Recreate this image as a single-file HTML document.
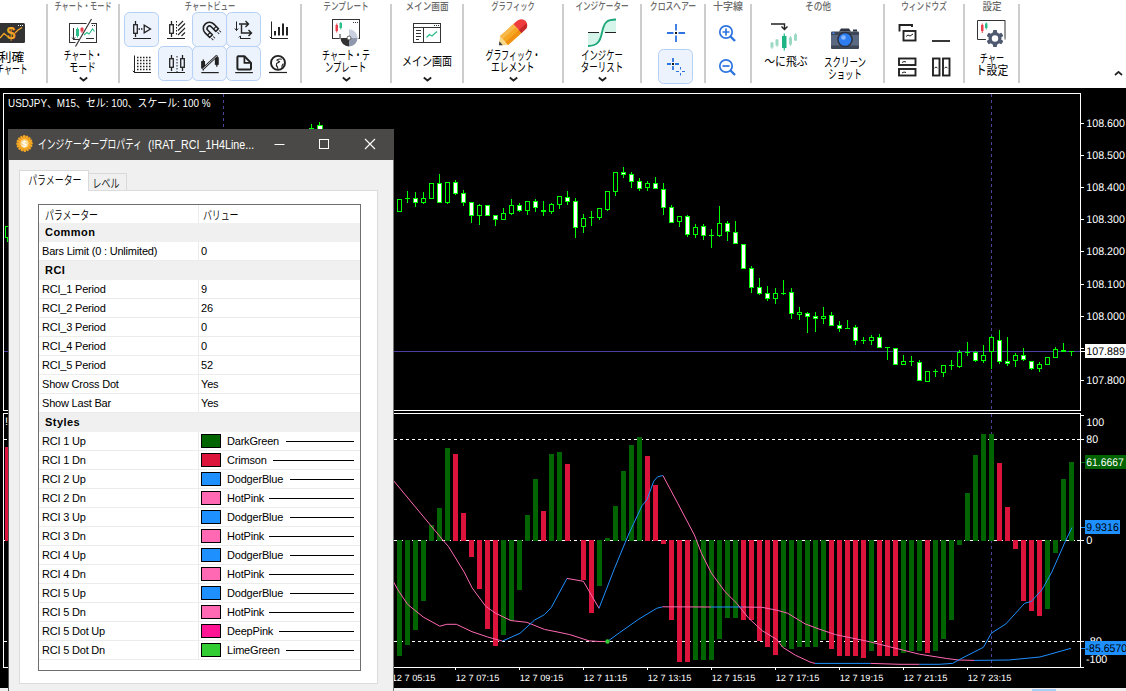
<!DOCTYPE html>
<html lang="ja"><head><meta charset="utf-8"><title>cTrader - インジケータープロパティ</title>
<style>
html,body{margin:0;padding:0}
body{width:1126px;height:691px;overflow:hidden;background:#000;position:relative;font-family:"Liberation Sans","Noto Sans CJK JP",sans-serif;}
.chart{position:absolute;left:0;top:0}
.strip{position:absolute;left:0;top:688px;width:1126px;height:3px;background:#efefef}
.strip i{position:absolute;left:1032px;top:1px;width:24px;height:2px;background:#a8cef5}
.sym{position:absolute;left:8px;top:97px;color:#fff;font-size:11px;line-height:13px;white-space:nowrap;transform-origin:0 0;transform:scaleX(.898)}
/* toolbar */
.tb{position:absolute;left:0;top:0;width:1126px;height:88px;background:#fff}
.sep{position:absolute;top:3.5px;width:1.4px;height:79.5px;background:#cdcdcd;margin-left:-.7px}
.gl{position:absolute;top:0;height:13px;line-height:13px;font-size:10.5px;font-weight:500;color:#6a6a6a;white-space:nowrap;text-align:center;transform:translateX(-50%)}
.gl span,.bl span{display:inline-block;transform-origin:50% 50%}
.bl{position:absolute;font-size:12.5px;line-height:12px;font-weight:400;color:#000;white-space:nowrap;text-align:center;transform:translateX(-50%)}
.tg{position:absolute;width:35px;height:35px;border:1.5px solid #b5d0f5;background:#edf3fd;border-radius:5.5px;box-sizing:border-box;margin:-.6px 0 0 -.6px}
.ic{position:absolute}
.chev{position:absolute;width:9px;height:6px}
/* dialog */
.dlg{position:absolute;left:8px;top:129px;width:386px;height:562px;background:#f0f0f0;font-size:11px;color:#000;box-sizing:border-box;border-left:1px solid #555452;border-right:1px solid #7a7978}
.dlg>*{margin-left:-1px}
.ttl{position:absolute;left:0;top:0;width:386px;height:31px;background:#4a4947}
.ticon{position:absolute;left:8px;top:6px}
.ttxt{position:absolute;top:7.5px;color:#fff;font-size:12.5px;line-height:16px;white-space:nowrap;transform-origin:0 50%}
.tk{left:30px;transform:scaleX(.7)}
.tl{left:139.5px;transform:scaleX(.855)}
.tbtn{position:absolute;top:9px}
.tab{position:absolute;box-sizing:border-box;border:1px solid #d9d9d9;border-bottom:none;font-size:12px;white-space:nowrap;text-align:center}
.tab span{display:inline-block;transform-origin:50% 50%;transform:scaleX(.745);font-weight:350;position:relative;top:1.5px;left:-1.5px}
.t1{left:11px;top:41px;width:70px;height:21px;background:#fff;line-height:17px;z-index:2}
.t2{left:80px;top:44px;width:39px;height:18px;background:#f0f0f0;line-height:16px}
.pane{position:absolute;left:11px;top:61px;width:359px;height:494px;background:#fff;border:1px solid #dcdcdc;box-sizing:border-box}
.tbl{position:absolute;left:30px;top:75px;width:323px;height:467px;border:1px solid #6e6e6e;box-sizing:border-box;background:#fff;overflow:hidden}
.hdr{height:18px;position:relative;font-size:12px}
.hdr .c2{padding-left:3.5px !important}
.hdr .c1,.hdr .c2{line-height:18px;border-bottom:none;padding-top:1.5px;padding-left:5.5px;font-weight:350}
.row{height:19px;position:relative;box-sizing:border-box;border-bottom:1px solid #ececec;line-height:18px;white-space:nowrap}
.grp{background:#f0f0f0;border-bottom-color:#f0f0f0;padding-left:6px;font-size:11px;line-height:19px;letter-spacing:.45px}
.c1{position:absolute;left:0;top:0;width:160px;height:100%;box-sizing:border-box;padding-left:3px;border-right:1px solid #ececec;letter-spacing:-.2px}
.c2{position:absolute;left:160px;top:0;right:0;height:100%;padding-left:2px;letter-spacing:-.2px}
.jp span{display:inline-block;transform-origin:0 50%;transform:scaleX(.75)}
.sw{position:absolute;left:2px;top:2px;width:18px;height:12px;border:1px solid #000}
.cn{position:absolute;left:28px;top:0}
.ln{position:absolute;top:9px;height:1px;background:#000}

</style></head><body>
<div class="strip"><i></i></div>
<svg class="chart" width="1126" height="691" viewBox="0 0 1126 691" shape-rendering="crispEdges">
<g fill="none" stroke="#fff" stroke-width="1">
<path d="M3.5 411 V93.5 H1080.5 V410.5 H3.5"/>
<path d="M3.5 667.5 V413.5 H1080.5 V667.5 H3.5"/>
</g>
<g stroke="#fff" stroke-width="1">
<path d="M1081 123.5 h3"/>
<path d="M1081 155.5 h3"/>
<path d="M1081 187.5 h3"/>
<path d="M1081 219.5 h3"/>
<path d="M1081 251.5 h3"/>
<path d="M1081 284.5 h3"/>
<path d="M1081 316.5 h3"/>
<path d="M1081 348.5 h3"/>
<path d="M1081 380.5 h3"/>
<path d="M1081 415.5 h3"/>
<path d="M1077 439.5 h7"/>
<path d="M1077 540.5 h7"/>
<path d="M1077 641.5 h7"/>
<path d="M1081 667.5 h3"/>
<path d="M1081 351.5 h4"/>
<path d="M455.5 667 v3"/>
<path d="M519.5 667 v3"/>
<path d="M583.5 667 v3"/>
<path d="M647.5 667 v3"/>
<path d="M711.5 667 v3"/>
<path d="M775.5 667 v3"/>
<path d="M839.5 667 v3"/>
<path d="M903.5 667 v3"/>
<path d="M967.5 667 v3"/>
</g>
<path d="M1081 462.5h4" stroke="#006400"/><path d="M1081 527.5h4M1081 648.5h4" stroke="#1e90ff"/>
<g stroke="#4c429a" stroke-width="1" stroke-dasharray="3 3">
<path d="M223.5 94 V410"/><path d="M991.5 94 V410"/><path d="M991.5 414 V667"/>
</g>
<path d="M4 351.5 H1080" stroke="#4a3f9e" stroke-width="1"/>
<g stroke="#fff" stroke-width="1" stroke-dasharray="3 3">
<path d="M4 439.5 H1080"/><path d="M4 540.5 H1080"/><path d="M4 641.5 H1080"/>
</g>
<rect x="5" y="447" width="5" height="94" fill="#dc143c"/>
<rect x="397" y="540" width="5" height="116" fill="#006400"/>
<rect x="405" y="540" width="5" height="105" fill="#006400"/>
<rect x="413" y="540" width="5" height="90" fill="#006400"/>
<rect x="421" y="540" width="5" height="61" fill="#006400"/>
<rect x="429" y="525" width="5" height="16" fill="#006400"/>
<rect x="437" y="508" width="5" height="33" fill="#006400"/>
<rect x="445" y="448" width="5" height="93" fill="#006400"/>
<rect x="453" y="454" width="5" height="87" fill="#dc143c"/>
<rect x="461" y="513" width="5" height="28" fill="#dc143c"/>
<rect x="469" y="540" width="5" height="17" fill="#dc143c"/>
<rect x="477" y="540" width="5" height="49" fill="#dc143c"/>
<rect x="485" y="540" width="5" height="89" fill="#dc143c"/>
<rect x="493" y="540" width="5" height="106" fill="#dc143c"/>
<rect x="501" y="540" width="5" height="95" fill="#006400"/>
<rect x="509" y="540" width="5" height="81" fill="#006400"/>
<rect x="517" y="540" width="5" height="50" fill="#006400"/>
<rect x="525" y="515" width="5" height="26" fill="#006400"/>
<rect x="533" y="479" width="5" height="62" fill="#006400"/>
<rect x="541" y="511" width="5" height="30" fill="#dc143c"/>
<rect x="549" y="454" width="5" height="87" fill="#006400"/>
<rect x="557" y="452" width="5" height="89" fill="#006400"/>
<rect x="565" y="464" width="5" height="77" fill="#dc143c"/>
<rect x="581" y="540" width="5" height="40" fill="#dc143c"/>
<rect x="589" y="540" width="5" height="73" fill="#dc143c"/>
<rect x="597" y="540" width="5" height="46" fill="#006400"/>
<rect x="605" y="538" width="5" height="3" fill="#006400"/>
<rect x="613" y="506" width="5" height="35" fill="#006400"/>
<rect x="621" y="471" width="5" height="70" fill="#006400"/>
<rect x="629" y="445" width="5" height="96" fill="#006400"/>
<rect x="637" y="437" width="5" height="104" fill="#006400"/>
<rect x="645" y="456" width="5" height="85" fill="#dc143c"/>
<rect x="653" y="485" width="5" height="56" fill="#dc143c"/>
<rect x="661" y="540" width="5" height="4" fill="#dc143c"/>
<rect x="669" y="540" width="5" height="80" fill="#dc143c"/>
<rect x="677" y="540" width="5" height="122" fill="#dc143c"/>
<rect x="685" y="540" width="5" height="122" fill="#dc143c"/>
<rect x="693" y="540" width="5" height="120" fill="#006400"/>
<rect x="701" y="540" width="5" height="120" fill="#006400"/>
<rect x="709" y="540" width="5" height="120" fill="#006400"/>
<rect x="717" y="540" width="5" height="99" fill="#006400"/>
<rect x="725" y="540" width="5" height="78" fill="#006400"/>
<rect x="733" y="540" width="5" height="78" fill="#006400"/>
<rect x="741" y="540" width="5" height="80" fill="#dc143c"/>
<rect x="749" y="540" width="5" height="80" fill="#dc143c"/>
<rect x="757" y="540" width="5" height="101" fill="#dc143c"/>
<rect x="765" y="540" width="5" height="107" fill="#dc143c"/>
<rect x="773" y="540" width="5" height="115" fill="#dc143c"/>
<rect x="781" y="540" width="5" height="107" fill="#006400"/>
<rect x="789" y="540" width="5" height="109" fill="#006400"/>
<rect x="797" y="540" width="5" height="107" fill="#006400"/>
<rect x="805" y="540" width="5" height="107" fill="#006400"/>
<rect x="813" y="540" width="5" height="107" fill="#006400"/>
<rect x="821" y="540" width="5" height="100" fill="#006400"/>
<rect x="829" y="540" width="5" height="109" fill="#dc143c"/>
<rect x="837" y="540" width="5" height="116" fill="#dc143c"/>
<rect x="845" y="540" width="5" height="116" fill="#dc143c"/>
<rect x="853" y="540" width="5" height="116" fill="#dc143c"/>
<rect x="861" y="540" width="5" height="118" fill="#dc143c"/>
<rect x="869" y="540" width="5" height="111" fill="#006400"/>
<rect x="877" y="540" width="5" height="116" fill="#dc143c"/>
<rect x="885" y="540" width="5" height="116" fill="#dc143c"/>
<rect x="893" y="540" width="5" height="116" fill="#dc143c"/>
<rect x="901" y="540" width="5" height="113" fill="#006400"/>
<rect x="909" y="540" width="5" height="111" fill="#006400"/>
<rect x="917" y="540" width="5" height="111" fill="#006400"/>
<rect x="925" y="540" width="5" height="113" fill="#dc143c"/>
<rect x="933" y="540" width="5" height="111" fill="#006400"/>
<rect x="941" y="540" width="5" height="99" fill="#006400"/>
<rect x="949" y="540" width="5" height="80" fill="#006400"/>
<rect x="957" y="540" width="5" height="5" fill="#006400"/>
<rect x="965" y="493" width="5" height="48" fill="#006400"/>
<rect x="973" y="455" width="5" height="86" fill="#006400"/>
<rect x="981" y="434" width="5" height="107" fill="#006400"/>
<rect x="989" y="434" width="5" height="107" fill="#006400"/>
<rect x="997" y="463" width="5" height="78" fill="#dc143c"/>
<rect x="1005" y="507" width="5" height="34" fill="#dc143c"/>
<rect x="1013" y="540" width="5" height="9" fill="#dc143c"/>
<rect x="1021" y="540" width="5" height="61" fill="#dc143c"/>
<rect x="1029" y="540" width="5" height="71" fill="#dc143c"/>
<rect x="1037" y="540" width="5" height="76" fill="#dc143c"/>
<rect x="1045" y="540" width="5" height="69" fill="#006400"/>
<rect x="1053" y="540" width="5" height="13" fill="#006400"/>
<rect x="1061" y="479" width="5" height="62" fill="#006400"/>
<rect x="1069" y="462" width="5" height="79" fill="#006400"/>
<rect x="311" y="124" width="1" height="6" fill="#00ff00"/><rect x="309" y="128" width="5" height="1" fill="#00ff00"/>
<rect x="319" y="122" width="1" height="4" fill="#00ff00"/><rect x="317" y="125" width="5" height="6" fill="#fff" stroke="#00ff00"/>
<rect x="7" y="226" width="1" height="16" fill="#00ff00"/>
<rect x="5.5" y="226.5" width="4" height="11" fill="#000" stroke="#00ff00" stroke-width="1"/>
<rect x="399" y="199" width="1" height="13" fill="#00ff00"/>
<rect x="397.5" y="199.5" width="4" height="12" fill="#000" stroke="#00ff00" stroke-width="1"/>
<rect x="407" y="191" width="1" height="12" fill="#00ff00"/>
<rect x="405" y="198" width="5" height="1" fill="#00ff00"/>
<rect x="415" y="192" width="1" height="15" fill="#00ff00"/>
<rect x="413.5" y="198.5" width="4" height="4" fill="#fff" stroke="#00ff00" stroke-width="1"/>
<rect x="423" y="192" width="1" height="12" fill="#00ff00"/>
<rect x="421.5" y="198.5" width="4" height="4" fill="#000" stroke="#00ff00" stroke-width="1"/>
<rect x="431" y="183" width="1" height="16" fill="#00ff00"/>
<rect x="429.5" y="183.5" width="4" height="15" fill="#000" stroke="#00ff00" stroke-width="1"/>
<rect x="439" y="174" width="1" height="29" fill="#00ff00"/>
<rect x="437.5" y="183.5" width="4" height="19" fill="#fff" stroke="#00ff00" stroke-width="1"/>
<rect x="447" y="182" width="1" height="22" fill="#00ff00"/>
<rect x="445.5" y="182.5" width="4" height="20" fill="#000" stroke="#00ff00" stroke-width="1"/>
<rect x="455" y="180" width="1" height="15" fill="#00ff00"/>
<rect x="453.5" y="182.5" width="4" height="11" fill="#fff" stroke="#00ff00" stroke-width="1"/>
<rect x="463" y="190" width="1" height="16" fill="#00ff00"/>
<rect x="461.5" y="193.5" width="4" height="9" fill="#fff" stroke="#00ff00" stroke-width="1"/>
<rect x="471" y="202" width="1" height="21" fill="#00ff00"/>
<rect x="469.5" y="202.5" width="4" height="13" fill="#fff" stroke="#00ff00" stroke-width="1"/>
<rect x="479" y="204" width="1" height="21" fill="#00ff00"/>
<rect x="477.5" y="205.5" width="4" height="10" fill="#000" stroke="#00ff00" stroke-width="1"/>
<rect x="487" y="205" width="1" height="11" fill="#00ff00"/>
<rect x="485.5" y="205.5" width="4" height="10" fill="#fff" stroke="#00ff00" stroke-width="1"/>
<rect x="495" y="215" width="1" height="11" fill="#00ff00"/>
<rect x="493.5" y="215.5" width="4" height="4" fill="#fff" stroke="#00ff00" stroke-width="1"/>
<rect x="503" y="208" width="1" height="12" fill="#00ff00"/>
<rect x="501.5" y="213.5" width="4" height="6" fill="#000" stroke="#00ff00" stroke-width="1"/>
<rect x="511" y="199" width="1" height="16" fill="#00ff00"/>
<rect x="509.5" y="205.5" width="4" height="8" fill="#000" stroke="#00ff00" stroke-width="1"/>
<rect x="519" y="203" width="1" height="9" fill="#00ff00"/>
<rect x="517.5" y="205.5" width="4" height="5" fill="#fff" stroke="#00ff00" stroke-width="1"/>
<rect x="527" y="201" width="1" height="14" fill="#00ff00"/>
<rect x="525.5" y="201.5" width="4" height="9" fill="#000" stroke="#00ff00" stroke-width="1"/>
<rect x="535" y="199" width="1" height="13" fill="#00ff00"/>
<rect x="533.5" y="201.5" width="4" height="6" fill="#fff" stroke="#00ff00" stroke-width="1"/>
<rect x="543" y="201" width="1" height="15" fill="#00ff00"/>
<rect x="541.5" y="210.5" width="4" height="1" fill="#fff" stroke="#00ff00" stroke-width="1"/>
<rect x="551" y="203" width="1" height="11" fill="#00ff00"/>
<rect x="549.5" y="204.5" width="4" height="7" fill="#000" stroke="#00ff00" stroke-width="1"/>
<rect x="559" y="196" width="1" height="13" fill="#00ff00"/>
<rect x="557.5" y="196.5" width="4" height="8" fill="#000" stroke="#00ff00" stroke-width="1"/>
<rect x="567" y="191" width="1" height="14" fill="#00ff00"/>
<rect x="565.5" y="197.5" width="4" height="4" fill="#fff" stroke="#00ff00" stroke-width="1"/>
<rect x="575" y="198" width="1" height="40" fill="#00ff00"/>
<rect x="573.5" y="201.5" width="4" height="26" fill="#fff" stroke="#00ff00" stroke-width="1"/>
<rect x="583" y="214" width="1" height="19" fill="#00ff00"/>
<rect x="581.5" y="218.5" width="4" height="8" fill="#000" stroke="#00ff00" stroke-width="1"/>
<rect x="591" y="211" width="1" height="15" fill="#00ff00"/>
<rect x="589" y="217" width="5" height="1" fill="#00ff00"/>
<rect x="599" y="208" width="1" height="12" fill="#00ff00"/>
<rect x="597.5" y="208.5" width="4" height="9" fill="#000" stroke="#00ff00" stroke-width="1"/>
<rect x="607" y="191" width="1" height="20" fill="#00ff00"/>
<rect x="605.5" y="191.5" width="4" height="18" fill="#000" stroke="#00ff00" stroke-width="1"/>
<rect x="615" y="172" width="1" height="24" fill="#00ff00"/>
<rect x="613.5" y="172.5" width="4" height="19" fill="#000" stroke="#00ff00" stroke-width="1"/>
<rect x="623" y="167" width="1" height="11" fill="#00ff00"/>
<rect x="621.5" y="172.5" width="4" height="2" fill="#fff" stroke="#00ff00" stroke-width="1"/>
<rect x="631" y="172" width="1" height="16" fill="#00ff00"/>
<rect x="629.5" y="174.5" width="4" height="7" fill="#fff" stroke="#00ff00" stroke-width="1"/>
<rect x="639" y="178" width="1" height="13" fill="#00ff00"/>
<rect x="637.5" y="181.5" width="4" height="7" fill="#fff" stroke="#00ff00" stroke-width="1"/>
<rect x="647" y="181" width="1" height="10" fill="#00ff00"/>
<rect x="645.5" y="183.5" width="4" height="4" fill="#000" stroke="#00ff00" stroke-width="1"/>
<rect x="655" y="177" width="1" height="12" fill="#00ff00"/>
<rect x="653.5" y="183.5" width="4" height="5" fill="#fff" stroke="#00ff00" stroke-width="1"/>
<rect x="663" y="183" width="1" height="32" fill="#00ff00"/>
<rect x="661.5" y="189.5" width="4" height="18" fill="#fff" stroke="#00ff00" stroke-width="1"/>
<rect x="671" y="205" width="1" height="18" fill="#00ff00"/>
<rect x="669.5" y="207.5" width="4" height="15" fill="#fff" stroke="#00ff00" stroke-width="1"/>
<rect x="679" y="216" width="1" height="11" fill="#00ff00"/>
<rect x="677.5" y="216.5" width="4" height="5" fill="#000" stroke="#00ff00" stroke-width="1"/>
<rect x="687" y="215" width="1" height="22" fill="#00ff00"/>
<rect x="685.5" y="216.5" width="4" height="18" fill="#fff" stroke="#00ff00" stroke-width="1"/>
<rect x="695" y="224" width="1" height="14" fill="#00ff00"/>
<rect x="693.5" y="227.5" width="4" height="7" fill="#000" stroke="#00ff00" stroke-width="1"/>
<rect x="703" y="224" width="1" height="16" fill="#00ff00"/>
<rect x="701.5" y="226.5" width="4" height="9" fill="#fff" stroke="#00ff00" stroke-width="1"/>
<rect x="711" y="229" width="1" height="19" fill="#00ff00"/>
<rect x="709" y="235" width="5" height="1" fill="#00ff00"/>
<rect x="719" y="206" width="1" height="31" fill="#00ff00"/>
<rect x="717.5" y="223.5" width="4" height="12" fill="#000" stroke="#00ff00" stroke-width="1"/>
<rect x="727" y="221" width="1" height="20" fill="#00ff00"/>
<rect x="725.5" y="223.5" width="4" height="8" fill="#fff" stroke="#00ff00" stroke-width="1"/>
<rect x="735" y="221" width="1" height="23" fill="#00ff00"/>
<rect x="733.5" y="232.5" width="4" height="11" fill="#fff" stroke="#00ff00" stroke-width="1"/>
<rect x="743" y="244" width="1" height="25" fill="#00ff00"/>
<rect x="741.5" y="244.5" width="4" height="24" fill="#fff" stroke="#00ff00" stroke-width="1"/>
<rect x="751" y="266" width="1" height="27" fill="#00ff00"/>
<rect x="749.5" y="268.5" width="4" height="19" fill="#fff" stroke="#00ff00" stroke-width="1"/>
<rect x="759" y="278" width="1" height="17" fill="#00ff00"/>
<rect x="757.5" y="287.5" width="4" height="6" fill="#fff" stroke="#00ff00" stroke-width="1"/>
<rect x="767" y="286" width="1" height="15" fill="#00ff00"/>
<rect x="765.5" y="293.5" width="4" height="5" fill="#fff" stroke="#00ff00" stroke-width="1"/>
<rect x="775" y="288" width="1" height="16" fill="#00ff00"/>
<rect x="773.5" y="293.5" width="4" height="5" fill="#000" stroke="#00ff00" stroke-width="1"/>
<rect x="783" y="280" width="1" height="15" fill="#00ff00"/>
<rect x="781" y="293" width="5" height="1" fill="#00ff00"/>
<rect x="791" y="288" width="1" height="31" fill="#00ff00"/>
<rect x="789.5" y="292.5" width="4" height="21" fill="#fff" stroke="#00ff00" stroke-width="1"/>
<rect x="799" y="307" width="1" height="13" fill="#00ff00"/>
<rect x="797.5" y="312.5" width="4" height="2" fill="#000" stroke="#00ff00" stroke-width="1"/>
<rect x="807" y="312" width="1" height="21" fill="#00ff00"/>
<rect x="805.5" y="313.5" width="4" height="3" fill="#fff" stroke="#00ff00" stroke-width="1"/>
<rect x="815" y="312" width="1" height="20" fill="#00ff00"/>
<rect x="813.5" y="316.5" width="4" height="2" fill="#fff" stroke="#00ff00" stroke-width="1"/>
<rect x="823" y="307" width="1" height="17" fill="#00ff00"/>
<rect x="821.5" y="316.5" width="4" height="2" fill="#000" stroke="#00ff00" stroke-width="1"/>
<rect x="831" y="312" width="1" height="14" fill="#00ff00"/>
<rect x="829.5" y="315.5" width="4" height="10" fill="#fff" stroke="#00ff00" stroke-width="1"/>
<rect x="839" y="321" width="1" height="11" fill="#00ff00"/>
<rect x="837.5" y="325.5" width="4" height="3" fill="#fff" stroke="#00ff00" stroke-width="1"/>
<rect x="847" y="320" width="1" height="9" fill="#00ff00"/>
<rect x="845" y="328" width="5" height="1" fill="#00ff00"/>
<rect x="855" y="325" width="1" height="20" fill="#00ff00"/>
<rect x="853.5" y="327.5" width="4" height="13" fill="#fff" stroke="#00ff00" stroke-width="1"/>
<rect x="863" y="337" width="1" height="7" fill="#00ff00"/>
<rect x="861" y="340" width="5" height="1" fill="#00ff00"/>
<rect x="871" y="335" width="1" height="10" fill="#00ff00"/>
<rect x="869.5" y="337.5" width="4" height="3" fill="#000" stroke="#00ff00" stroke-width="1"/>
<rect x="879" y="334" width="1" height="14" fill="#00ff00"/>
<rect x="877.5" y="337.5" width="4" height="10" fill="#fff" stroke="#00ff00" stroke-width="1"/>
<rect x="887" y="347" width="1" height="13" fill="#00ff00"/>
<rect x="885" y="347" width="5" height="1" fill="#00ff00"/>
<rect x="895" y="348" width="1" height="17" fill="#00ff00"/>
<rect x="893.5" y="348.5" width="4" height="16" fill="#fff" stroke="#00ff00" stroke-width="1"/>
<rect x="903" y="355" width="1" height="10" fill="#00ff00"/>
<rect x="901.5" y="361.5" width="4" height="3" fill="#000" stroke="#00ff00" stroke-width="1"/>
<rect x="911" y="356" width="1" height="10" fill="#00ff00"/>
<rect x="909" y="361" width="5" height="1" fill="#00ff00"/>
<rect x="919" y="360" width="1" height="21" fill="#00ff00"/>
<rect x="917.5" y="362.5" width="4" height="18" fill="#fff" stroke="#00ff00" stroke-width="1"/>
<rect x="927" y="371" width="1" height="11" fill="#00ff00"/>
<rect x="925.5" y="371.5" width="4" height="10" fill="#000" stroke="#00ff00" stroke-width="1"/>
<rect x="935" y="369" width="1" height="8" fill="#00ff00"/>
<rect x="933" y="371" width="5" height="1" fill="#00ff00"/>
<rect x="943" y="365" width="1" height="12" fill="#00ff00"/>
<rect x="941.5" y="365.5" width="4" height="7" fill="#000" stroke="#00ff00" stroke-width="1"/>
<rect x="951" y="360" width="1" height="10" fill="#00ff00"/>
<rect x="949" y="365" width="5" height="1" fill="#00ff00"/>
<rect x="959" y="350" width="1" height="18" fill="#00ff00"/>
<rect x="957.5" y="352.5" width="4" height="14" fill="#000" stroke="#00ff00" stroke-width="1"/>
<rect x="967" y="342" width="1" height="14" fill="#00ff00"/>
<rect x="965" y="352" width="5" height="1" fill="#00ff00"/>
<rect x="975" y="351" width="1" height="11" fill="#00ff00"/>
<rect x="973.5" y="352.5" width="4" height="8" fill="#fff" stroke="#00ff00" stroke-width="1"/>
<rect x="983" y="345" width="1" height="18" fill="#00ff00"/>
<rect x="981.5" y="355.5" width="4" height="5" fill="#000" stroke="#00ff00" stroke-width="1"/>
<rect x="991" y="336" width="1" height="33" fill="#00ff00"/>
<rect x="989.5" y="337.5" width="4" height="14" fill="#000" stroke="#00ff00" stroke-width="1"/>
<rect x="999" y="330" width="1" height="34" fill="#00ff00"/>
<rect x="997.5" y="340.5" width="4" height="21" fill="#fff" stroke="#00ff00" stroke-width="1"/>
<rect x="1007" y="337" width="1" height="29" fill="#00ff00"/>
<rect x="1005.5" y="361.5" width="4" height="2" fill="#fff" stroke="#00ff00" stroke-width="1"/>
<rect x="1015" y="353" width="1" height="14" fill="#00ff00"/>
<rect x="1013.5" y="355.5" width="4" height="5" fill="#000" stroke="#00ff00" stroke-width="1"/>
<rect x="1023" y="348" width="1" height="13" fill="#00ff00"/>
<rect x="1021.5" y="355.5" width="4" height="4" fill="#fff" stroke="#00ff00" stroke-width="1"/>
<rect x="1031" y="361" width="1" height="9" fill="#00ff00"/>
<rect x="1029.5" y="361.5" width="4" height="7" fill="#fff" stroke="#00ff00" stroke-width="1"/>
<rect x="1039" y="362" width="1" height="10" fill="#00ff00"/>
<rect x="1037.5" y="364.5" width="4" height="4" fill="#000" stroke="#00ff00" stroke-width="1"/>
<rect x="1047" y="357" width="1" height="8" fill="#00ff00"/>
<rect x="1045.5" y="357.5" width="4" height="7" fill="#000" stroke="#00ff00" stroke-width="1"/>
<rect x="1055" y="347" width="1" height="11" fill="#00ff00"/>
<rect x="1053.5" y="349.5" width="4" height="8" fill="#000" stroke="#00ff00" stroke-width="1"/>
<rect x="1063" y="343" width="1" height="9" fill="#00ff00"/>
<rect x="1061.5" y="350.5" width="4" height="1" fill="#fff" stroke="#00ff00" stroke-width="1"/>
<rect x="1071" y="351" width="1" height="5" fill="#00ff00"/>
<rect x="1069" y="351" width="5" height="1" fill="#00ff00"/>
<g fill="none" stroke-width="1" shape-rendering="auto" stroke-linejoin="round">
<polyline stroke="#ff69b4" points="393,480 442.8,540 448.6,546.7 464.2,572.1 472,587.7 485.7,606.3 495.5,613.2 511,620.6 526.8,622.3 544.4,629.4 558,632.1 569.8,634.6 589.3,640.9 600,641.5 607.4,641.5"/>
<polyline stroke="#1e90ff" points="607.4,641.5 619.5,632.7 639,619 656.7,608.3 662.5,606.8"/>
<polyline stroke="#ff69b4" points="662.5,606.8 711,607"/>
<polyline stroke="#1e90ff" points="711,607 742.6,607"/>
<polyline stroke="#ff69b4" points="742.6,607 762,607.3 776.8,610.2 787.6,613.2 805.2,623.9 820,629.4 835.4,634.6 868.6,641.5 903.8,650.3 919.4,654.2 946.8,658.5 958.5,660 974,660.4"/>
<polyline stroke="#1e90ff" points="974,660.4 1008.8,660 1040,657 1071,648.3"/>
<polyline stroke="#ff69b4" points="393,581 398,590 407.6,604.4 423.2,617 439.8,626.2 446.7,624.3 456.4,624.3 472,631.7 487.7,637 502.3,641.1"/>
<polyline stroke="#1e90ff" points="502.3,641.1 520,633.3 534.6,620 544.4,614.7 551.2,607.7 567,578.4"/>
<polyline stroke="#ff69b4" points="567,578.4 583.4,581.3 599,608.3"/>
<polyline stroke="#1e90ff" points="599,608.3 614.6,568.2 628.3,535 642,505.7 646.9,499.9 653.7,481.3 657.6,476.8 662.9,475.5"/>
<polyline stroke="#ff69b4" points="662.9,475.5 678,503.8 694.4,535 701.6,553.6 711.4,573.1 725,591.7 736.8,603.4 748.5,618 762.2,630.7 776.8,639.5 782.7,647.3 795.4,655.2 810,662 815,663.4"/>
<polyline stroke="#1e90ff" points="815,663.4 870.6,663.4"/>
<polyline stroke="#ff69b4" points="870.6,663.4 900,664.3 919.4,664.3"/>
<polyline stroke="#1e90ff" points="919.4,664.3 939,664.3 952.6,663.4 960.4,659 983.4,647.3 991.3,633.2 1005.9,623.9 1024.5,603.4 1031.3,601.4 1042,589.7 1051.8,572.1 1065.5,540.9 1072,527.5"/>
</g>
<circle cx="607.5" cy="641.5" r="2.2" fill="#32cd32" shape-rendering="auto"/>
<g font-family="Liberation Sans, Arial, sans-serif" font-size="11" fill="#fff" shape-rendering="auto" text-rendering="geometricPrecision">
<text x="1086.3" y="127" textLength="38.6" lengthAdjust="spacingAndGlyphs">108.600</text>
<text x="1086.3" y="159" textLength="38.6" lengthAdjust="spacingAndGlyphs">108.500</text>
<text x="1086.3" y="191" textLength="38.6" lengthAdjust="spacingAndGlyphs">108.400</text>
<text x="1086.3" y="223" textLength="38.6" lengthAdjust="spacingAndGlyphs">108.300</text>
<text x="1086.3" y="255" textLength="38.6" lengthAdjust="spacingAndGlyphs">108.200</text>
<text x="1086.3" y="288" textLength="38.6" lengthAdjust="spacingAndGlyphs">108.100</text>
<text x="1086.3" y="320" textLength="38.6" lengthAdjust="spacingAndGlyphs">108.000</text>
<text x="1086.3" y="384" textLength="38.6" lengthAdjust="spacingAndGlyphs">107.800</text>
<text x="1086.3" y="425.5" textLength="17.8" lengthAdjust="spacingAndGlyphs">100</text>
<text x="1086.3" y="442.5" textLength="11.8" lengthAdjust="spacingAndGlyphs">80</text>
<text x="1086.3" y="544" >0</text>
<text x="5" y="425" font-size="11">!RAT_RCI_1H4Line</text>
<text x="1086" y="644.5" >-80</text>
<text x="1086" y="663" textLength="21.3" lengthAdjust="spacingAndGlyphs">-100</text>
<rect x="1085" y="344" width="41" height="14" fill="#fff" shape-rendering="crispEdges"/>
<rect x="1085" y="455" width="41" height="14" fill="#006400" shape-rendering="crispEdges"/>
<rect x="1085" y="520" width="35" height="14" fill="#1e90ff" shape-rendering="crispEdges"/>
<rect x="1085" y="641" width="41" height="14" fill="#1e90ff" shape-rendering="crispEdges"/>
<text x="1086.3" y="355" textLength="38.6" lengthAdjust="spacingAndGlyphs" fill="#000">107.889</text>
<text x="1086.3" y="465.5" textLength="37.4" lengthAdjust="spacingAndGlyphs">61.6667</text>
<text x="1086.3" y="530.7" textLength="32.5" lengthAdjust="spacingAndGlyphs" fill="#000">9.9316</text>
<text x="1085.6" y="651.6" textLength="41.5" lengthAdjust="spacingAndGlyphs" fill="#000">-85.6570</text>
</g>
<g font-family="Liberation Sans, Arial, sans-serif" font-size="9" fill="#fff" shape-rendering="auto" text-rendering="geometricPrecision">
<text x="391.7" y="681" textLength="43.6" lengthAdjust="spacingAndGlyphs">12 7 05:15</text>
<text x="455.7" y="681" textLength="43.6" lengthAdjust="spacingAndGlyphs">12 7 07:15</text>
<text x="519.7" y="681" textLength="43.6" lengthAdjust="spacingAndGlyphs">12 7 09:15</text>
<text x="583.7" y="681" textLength="43.6" lengthAdjust="spacingAndGlyphs">12 7 11:15</text>
<text x="647.7" y="681" textLength="43.6" lengthAdjust="spacingAndGlyphs">12 7 13:15</text>
<text x="711.7" y="681" textLength="43.6" lengthAdjust="spacingAndGlyphs">12 7 15:15</text>
<text x="775.7" y="681" textLength="43.6" lengthAdjust="spacingAndGlyphs">12 7 17:15</text>
<text x="839.7" y="681" textLength="43.6" lengthAdjust="spacingAndGlyphs">12 7 19:15</text>
<text x="903.7" y="681" textLength="43.6" lengthAdjust="spacingAndGlyphs">12 7 21:15</text>
<text x="967.7" y="681" textLength="43.6" lengthAdjust="spacingAndGlyphs">12 7 23:15</text>
</g>
</svg>
<div class="sym">USDJPY、M15、セル: 100、スケール: 100 %</div>
<div class="tb">
<i class="sep" style="left:47px"></i>
<i class="sep" style="left:119px"></i>
<i class="sep" style="left:301px"></i>
<i class="sep" style="left:391px"></i>
<i class="sep" style="left:463px"></i>
<i class="sep" style="left:563px"></i>
<i class="sep" style="left:641px"></i>
<i class="sep" style="left:705px"></i>
<i class="sep" style="left:751px"></i>
<i class="sep" style="left:884px"></i>
<i class="sep" style="left:964px"></i>
<i class="sep" style="left:1019px"></i>
<div class="gl" style="left:83px"><span style="transform:scaleX(0.681)">チャート・モード</span></div>
<div class="gl" style="left:210px"><span style="transform:scaleX(0.686)">チャートビュー</span></div>
<div class="gl" style="left:346px"><span style="transform:scaleX(0.725)">テンプレート</span></div>
<div class="gl" style="left:427px"><span style="transform:scaleX(0.820)">メイン画面</span></div>
<div class="gl" style="left:513px"><span style="transform:scaleX(0.695)">グラフィック</span></div>
<div class="gl" style="left:602px"><span style="transform:scaleX(0.724)">インジケーター</span></div>
<div class="gl" style="left:673px"><span style="transform:scaleX(0.755)">クロスヘアー</span></div>
<div class="gl" style="left:728px"><span style="transform:scaleX(0.950)">十字線</span></div>
<div class="gl" style="left:817.5px"><span style="transform:scaleX(0.833)">その他</span></div>
<div class="gl" style="left:924px"><span style="transform:scaleX(0.725)">ウィンドウズ</span></div>
<div class="gl" style="left:991.5px"><span style="transform:scaleX(0.915)">設定</span></div>
<div class="bl" style="left:11.5px;top:53px;line-height:11.8px"><div><span style="transform:scaleX(1.020)">利確</span></div><div><span style="transform:scaleX(0.630)">チャート</span></div></div>
<div class="bl" style="left:83px;top:51px;line-height:11.8px"><div><span style="transform:scaleX(0.616)">チャート・</span></div><div><span style="transform:scaleX(0.707)">モード</span></div></div>
<div class="bl" style="left:346px;top:51px;line-height:11.8px"><div><span style="transform:scaleX(0.640)">チャート・テ</span></div><div><span style="transform:scaleX(0.664)">ンプレート</span></div></div>
<div class="bl" style="left:427px;top:57px;line-height:11.8px"><div><span style="transform:scaleX(0.800)">メイン画面</span></div></div>
<div class="bl" style="left:513px;top:51px;line-height:11.8px"><div><span style="transform:scaleX(0.630)">グラフィック・</span></div><div><span style="transform:scaleX(0.696)">エレメント</span></div></div>
<div class="bl" style="left:602px;top:51px;line-height:11.8px"><div><span style="transform:scaleX(0.664)">インジケー</span></div><div><span style="transform:scaleX(0.680)">ターリスト</span></div></div>
<div class="bl" style="left:785.5px;top:57px;line-height:11.8px"><div><span style="transform:scaleX(0.870)">～に飛ぶ</span></div></div>
<div class="bl" style="left:845px;top:58.3px;line-height:11.8px"><div><span style="transform:scaleX(0.680)">スクリーン</span></div><div><span style="transform:scaleX(0.670)">ショット</span></div></div>
<div class="bl" style="left:992px;top:52.5px;line-height:12.5px"><div><span style="transform:scaleX(0.653)">チャー</span></div><div><span style="transform:scaleX(0.867)">ト設定</span></div></div>
<svg class="chev" style="left:78.5px;top:76.3px" viewBox="0 0 9 6"><path d="M0.8 1.6l3.7 2.9L8.2 1.6" fill="none" stroke="#222" stroke-width="1.9"/></svg>
<svg class="chev" style="left:341.5px;top:76.3px" viewBox="0 0 9 6"><path d="M0.8 1.6l3.7 2.9L8.2 1.6" fill="none" stroke="#222" stroke-width="1.9"/></svg>
<svg class="chev" style="left:422.5px;top:76.3px" viewBox="0 0 9 6"><path d="M0.8 1.6l3.7 2.9L8.2 1.6" fill="none" stroke="#222" stroke-width="1.9"/></svg>
<svg class="chev" style="left:508.5px;top:76.3px" viewBox="0 0 9 6"><path d="M0.8 1.6l3.7 2.9L8.2 1.6" fill="none" stroke="#222" stroke-width="1.9"/></svg>
<svg class="chev" style="left:597.5px;top:76.3px" viewBox="0 0 9 6"><path d="M0.8 1.6l3.7 2.9L8.2 1.6" fill="none" stroke="#222" stroke-width="1.9"/></svg>
<svg class="chev" style="left:1113.5px;top:70px" viewBox="0 0 9 6"><path d="M1 5l3.5 -3.2L8 5" fill="none" stroke="#222" stroke-width="1.7"/></svg>
<i class="tg" style="left:125px;top:13px"></i>
<i class="tg" style="left:193px;top:13px"></i>
<i class="tg" style="left:227px;top:13px"></i>
<i class="tg" style="left:159px;top:47px"></i>
<i class="tg" style="left:193px;top:47px"></i>
<i class="tg" style="left:227px;top:47px"></i>
<i class="tg" style="left:659px;top:50px"></i>
<svg class="ic" style="left:0;top:0" width="1126" height="88" viewBox="0 0 1126 88" fill="none">
<!-- 利確チャート (cut) -->
<rect x="-6" y="23" width="31" height="20" rx="1.5" fill="#333"/>
<path d="M0 38l4-4.5 3 2.5M15 33l3-3 4-2.5" stroke="#f5a623" stroke-width="1.3"/>
<text x="11" y="38.500" font-family="Liberation Sans, sans-serif" font-weight="bold" font-size="16" fill="#f5a623" text-anchor="middle">$</text>
<path d="M18 25.5h1M20 25.5h1M22 25.5h1" stroke="#fff" stroke-width="1"/>
<!-- チャート・モード -->
<rect x="69.5" y="23.5" width="27" height="19" stroke="#333" stroke-width="1"/>
<path d="M91.5 19L75.5 46.5" stroke="#fff" stroke-width="4"/>
<path d="M91.5 19L75.5 46.5" stroke="#333" stroke-width="1.2"/>
<path d="M92 25.5h1M94 25.5h1" stroke="#333"/>
<path d="M73.5 28v11M72 37.5l1.5 1.8 1.5-1.8M73 39.5h6" stroke="#333" stroke-width="1"/>
<rect x="76" y="29" width="3" height="7" fill="#2dbf8a"/><path d="M77.5 27.5v10" stroke="#2dbf8a"/>
<rect x="80.5" y="28" width="3" height="3.5" fill="#e8414d"/><path d="M82 27v6" stroke="#e8414d"/>
<path d="M84 35l3-2.5 2 1.5 3.5-5 2 2.5" stroke="#2dbf8a" stroke-width="1.1"/>
<path d="M86 38.500h8" stroke="#333"/>
<!-- r1c1 candle-arrow -->
<g stroke="#222" stroke-width="1.3">
<rect x="133.700" y="24.700" width="3.600" height="8.600"/><path d="M135.500 21v3.500M135.500 33.500v3.500"/>
<path d="M138.500 29h1.500M141 29h1.500"/>
<path d="M144.200 25.200v7.600l6.300-3.800z"/>
<path d="M133 38.500h18" stroke-width="1"/>
<!-- r1c2 candle-hatch -->
<rect x="169.700" y="24.700" width="3.600" height="8.600"/><path d="M171.500 21v3.500M171.500 33.500v3.500"/>
<path d="M176.500 21v1.500M176.500 24v1.500M176.500 27v1.500M176.500 30v1.500M176.500 33v1.500" stroke-width="1"/>
<path d="M178 26l5-5M178 30.500l7-7M178 35l7-7M181.500 36l3.500-3.500" stroke-width="1.100"/>
<path d="M167 38.500h18" stroke-width="1"/>
</g>
<!-- r1c3 magnet -->
<g transform="translate(209.500 28.500) rotate(45)" stroke="#222" stroke-width="1.600" stroke-linejoin="round">
<path d="M6.500 -6.200H0A6.200 6.200 0 0 0 0 6.200H6.500V2.400H0A2.400 2.400 0 0 1 0 -2.400H6.500Z"/>
<path d="M3.300 -6.200v3.800M3.300 2.400v3.800" stroke-width="1.200"/>
<path d="M8.300 -5.500h2.500M8.300 -3h2.500M8.300 3h2.500M8.300 5.500h2.500" stroke-width="1" />
</g>
<!-- r1c4 arrows -->
<g stroke="#222" stroke-width="1.4">
<path d="M236.500 21.500v9M234.800 28.500l1.700 2 1.700-2" stroke-width="1"/>
<path d="M239 24h9M245.500 21l3 3-3 3"/>
<path d="M241.500 24.500v8.500h10M248.500 30l3 3-3 3"/>
<path d="M240.500 36v3M238.800 37.500l1.700-1.700M240.500 38.500h10" stroke-width="1"/>
</g>
<!-- r1c5 bars -->
<g stroke="#222">
<path d="M271.500 21.500v17M269.800 36.800l1.700 1.700M271 38.500h17" stroke-width="1"/>
<path d="M275 31v4.500M279 27v8.500M283 23.500v12M287 27v8.500" stroke-width="2"/>
</g>
<!-- r2c1 grid -->
<g stroke="#222" stroke-width="1">
<path d="M134.500 55.500v17M132.800 70.800l1.700 1.700M134 72.500h17"/>
<path d="M137 57.500h14M137 60.500h14M137 63.500h14M137 66.500h14M137 69.500h14" stroke-dasharray="1.500 1.500" stroke-width="1.300"/>
</g>
<!-- r2c2 two candles -->
<g stroke="#222" stroke-width="1.3">
<rect x="169.700" y="58.700" width="3.600" height="8.600"/><path d="M171.500 55v3.500M171.500 67.500v3.500"/>
<rect x="180.700" y="58.700" width="3.600" height="8.600"/><path d="M182.500 55v3.500M182.500 67.500v3.500"/>
<path d="M177 56v1.500M177 59v1.500M177 62v1.500M177 65v1.500M177 68v1.500M177 71v2" stroke-width="1"/>
<path d="M167 72.500h18" stroke-width="1"/>
</g>
<!-- r2c3 candles + diagonal -->
<g stroke="#222" stroke-width="1.300">
<rect x="201.800" y="61.700" width="2.600" height="6" fill="#222"/><path d="M203.300 59.400v11"/>
<rect x="215.500" y="57.900" width="2.600" height="6.300" fill="#222"/><path d="M216.800 55.300v11.500"/>
<path d="M202.300 69.300l14.800-13.600" stroke-width="2.400"/>
<path d="M202.300 69.300l14.800-13.600" stroke="#edf3fd" stroke-width=".8"/>
<path d="M201.300 72.600h17.400" stroke-width="1.200"/>
</g>
<!-- r2c4 page -->
<g stroke="#222" stroke-width="2" stroke-linejoin="round">
<path d="M238.400 56.300h6l6.600 6.600v5.600a1 1 0 0 1 -1 1h-11.600a1 1 0 0 1 -1 -1v-11.200a1 1 0 0 1 1 -1z"/>
<path d="M244.400 56.300v6.600h6.600" stroke-width="1.700"/>
<path d="M235.200 72.600h17.700" stroke-width="1.200"/>
</g>
<!-- r2c5 globe -->
<g stroke="#222" stroke-width="1.900">
<circle cx="278" cy="62.900" r="7"/>
<path d="M281.800 59.300c-2-.6 -3.500-.3 -5 .8l2.800 1.700 -3 1.600c-.6 1.500 -.3 2.600 .8 3.600l.6 1.800M283.500 63.700l-1.500 2v2.600" stroke-width="1.100" stroke-linejoin="round"/>
<path d="M269 72.500h18" stroke-width="1.200"/>
</g>
<!-- template -->
<rect x="332.500" y="19.500" width="27" height="19" stroke="#333" fill="#fff"/>
<path d="M353 22.500h1M355 22.500h1M357 22.500h1" stroke="#333"/>
<rect x="335.500" y="25" width="2.500" height="6" fill="#e8414d"/><path d="M336.750 23.500v9" stroke="#e8414d"/>
<rect x="339.500" y="23" width="2.500" height="5" fill="#2dbf8a"/><path d="M340.750 22v7.500" stroke="#2dbf8a"/>
<circle cx="349" cy="38" r="9.500" fill="#fff"/>
<circle cx="349" cy="38" r="8.500" fill="#dfe3ec"/>
<path d="M349 38V29.500A8.500 8.500 0 0 1 357.500 38z" fill="#c9cfdd"/>
<path d="M349 38h8.500A8.500 8.500 0 0 1 349 46.500z" fill="#8f98ad"/>
<path d="M349 38v8.500A8.500 8.500 0 0 1 340.500 38z" fill="#333"/>
<path d="M349 38H340.500A8.500 8.500 0 0 1 349 29.500z" fill="#fff"/>
<path d="M340 34v4.500" stroke="#333"/>
<circle cx="349" cy="38" r="2" fill="#fff" stroke="#444" stroke-width=".8"/>
<!-- main screen -->
<rect x="413.500" y="23.500" width="27" height="19" stroke="#333"/>
<path d="M413.500 27.500h27M423.500 27.500v15" stroke="#333"/>
<path d="M434 25.500h1M436 25.500h1M438 25.500h1" stroke="#333"/>
<path d="M416 30.500h5M416 33.500h5M416 36.500h5M416 39.500h3" stroke="#333"/>
<path d="M426.500 37.500l3-3 2.500 1.500 5-4.500" stroke="#2dbf8a" stroke-width="1.300"/>
<!-- pencil -->
<g transform="translate(513 32.500) rotate(-42)">
<path d="M-19 0l7-6v12z" fill="#f7d98b"/>
<path d="M-19 0l3-2.600v5.200z" fill="#444"/>
<rect x="-12" y="-6" width="18" height="12" fill="#f5a623"/>
<rect x="-12" y="-6" width="18" height="4" fill="#f7b84a"/>
<rect x="-12" y="2" width="18" height="4" fill="#f29111"/>
<path d="M6 -6h5a6 6 0 0 1 0 12h-5z" fill="#ef3b3b"/>
<path d="M6 2h10.600a6 6 0 0 1 -5.600 4h-5z" fill="#c62828"/>
</g>
<!-- indicator -->
<path d="M588 46.500c9 0 13 -3 15 -14H588z" fill="#d5f4ea"/>
<path d="M616 19c-9 0 -12 3 -13 13.500H616z" fill="#d5f4ea"/>
<path d="M588 32.500h11M605 32.500h11" stroke="#222" stroke-width="1.2"/>
<path d="M588 46c8 0 12 -3 14 -13.500s5 -13 14 -13" stroke="#1aa77a" stroke-width="1.800"/>
<!-- crosshair -->
<path d="M676 24v6.500M676 35.500v6.500M667 33h6.500M678.500 33h6.500" stroke="#2d74e0" stroke-width="1.800"/>
<rect x="675" y="32" width="2" height="2" fill="#111"/>
<path d="M673 58v4M673 66v4M667 64h4M675 64h4" stroke="#2d74e0" stroke-width="1.800"/>
<rect x="672" y="63" width="2" height="2" fill="#111"/>
<path d="M680.500 67v2.500M680.500 73v2.500M676 71.500h3M682 71.500h3" stroke="#2d74e0" stroke-width="1"/>
<!-- zoom in/out -->
<g stroke="#2d74e0" stroke-width="1.700">
<circle cx="726" cy="32" r="6.200"/><path d="M730.500 36.500l4.500 4.500" stroke-width="2.400"/><path d="M722.500 32h7M726 28.500v7"/>
<circle cx="726" cy="66" r="6.200"/><path d="M730.500 70.500l4.500 4.500" stroke-width="2.400"/><path d="M722.500 66h7"/>
</g>
<!-- jump to -->
<path d="M771 24h13.500v4.500M781.500 26.500l3 3 3-3" stroke="#222" stroke-width="1.400"/>
<rect x="782" y="36" width="4.500" height="12" fill="#1db584"/><path d="M784.250 33.500v17" stroke="#1db584" stroke-width="1.200"/>
<g fill="#9ad9c4" stroke="#9ad9c4" stroke-width="1">
<rect x="771" y="43" width="2" height="4"/><path d="M772 42v7"/>
<rect x="776" y="40" width="2" height="5"/><path d="M777 39v8"/>
<rect x="789.500" y="38" width="2" height="6"/><path d="M790.500 36v10"/>
<rect x="794.500" y="35" width="2" height="5"/><path d="M795.500 33v8"/>
</g>
<!-- camera -->
<rect x="831" y="31.500" width="28" height="17.500" rx="1" fill="#3c4657"/>
<rect x="831" y="35" width="28" height="10.500" fill="#5b6881"/>
<path d="M839 31.500l2-3h8l2 3z" fill="#2b3240"/>
<rect x="853" y="29.500" width="4" height="2" fill="#2b3240"/>
<rect x="832.500" y="32.500" width="2" height="1.500" fill="#4a90ff"/>
<circle cx="845" cy="39.500" r="7.800" fill="#2b3240"/>
<circle cx="845" cy="39.500" r="6.300" fill="#2d7cf0"/>
<circle cx="843.500" cy="37.500" r="2.300" fill="#8ab8ff"/>
<!-- windows -->
<g stroke="#222" stroke-width="1.900">
<path d="M899.500 31.500v-6.500h12.500v2"/>
<rect x="903.500" y="31" width="12" height="9.500"/>
<path d="M906 36.500l2-1.500 2 1 3-2" stroke-width="1"/>
<path d="M932 41h18" stroke-width="1.800"/>
<rect x="899" y="58.500" width="16.500" height="6.500"/><rect x="899" y="69" width="16.500" height="6.500"/>
<path d="M902 62.500l2-1 2 .5" stroke-width="1"/><path d="M902 73l2-1 2 .5" stroke-width="1"/>
<rect x="933" y="58.500" width="6.500" height="17"/><rect x="943" y="58.500" width="6.500" height="17"/>
<path d="M934.500 68l1.500-1 1.500 1" stroke-width="1"/><path d="M944.500 68l1.500-1 1.500 1" stroke-width="1"/>
</g>
<!-- chart settings -->
<path d="M990 39.500h-12.500v-19h27.500v19" stroke="#333"/>
<path d="M1005 20.500v-.5" stroke="#333"/>
<rect x="981" y="25" width="2.500" height="6" fill="#e8414d"/><path d="M982.250 23.500v9.500" stroke="#e8414d"/>
<rect x="985" y="23.500" width="2.500" height="4.500" fill="#2dbf8a"/><path d="M986.250 22.500v7" stroke="#2dbf8a"/>
<circle cx="995" cy="38.500" r="9.300" fill="#fff"/>
<g transform="translate(995 38.500)" fill="#4f5a70">
<circle r="6.500"/>
<rect x="-2" y="-8.500" width="4" height="17" rx=".8"/>
<rect x="-2" y="-8.500" width="4" height="17" rx=".8" transform="rotate(60)"/>
<rect x="-2" y="-8.500" width="4" height="17" rx=".8" transform="rotate(120)"/>
<circle r="3.200" fill="#fff"/>
</g>
</svg>

</div>
<div class="dlg">
<div class="ttl"><svg class="ticon" width="17" height="17" viewBox="0 0 17 17"><g fill="#f5a623"><rect x="7.3" y="0.2" width="2.4" height="16.6" rx="1" transform="rotate(0 8.5 8.5)"/><rect x="7.3" y="0.2" width="2.4" height="16.6" rx="1" transform="rotate(22 8.5 8.5)"/><rect x="7.3" y="0.2" width="2.4" height="16.6" rx="1" transform="rotate(44 8.5 8.5)"/><rect x="7.3" y="0.2" width="2.4" height="16.6" rx="1" transform="rotate(66 8.5 8.5)"/><rect x="7.3" y="0.2" width="2.4" height="16.6" rx="1" transform="rotate(88 8.5 8.5)"/><rect x="7.3" y="0.2" width="2.4" height="16.6" rx="1" transform="rotate(110 8.5 8.5)"/><rect x="7.3" y="0.2" width="2.4" height="16.6" rx="1" transform="rotate(132 8.5 8.5)"/><rect x="7.3" y="0.2" width="2.4" height="16.6" rx="1" transform="rotate(154 8.5 8.5)"/><rect x="7.3" y="0.2" width="2.4" height="16.6" rx="1" transform="rotate(176 8.5 8.5)"/></g><circle cx="8.5" cy="8.5" r="6" fill="#f7a823"/><circle cx="8.5" cy="8.5" r="4.2" fill="#fbd58a"/><text x="8.5" y="11.6" font-size="8.5" font-weight="bold" text-anchor="middle" fill="#fff" font-family="Liberation Sans, sans-serif">$</text></svg><span class="ttxt tk">インジケータープロパティ</span><span class="ttxt tl">(!RAT_RCI_1H4Line...</span><svg class="tbtn" style="left:266px" width="12" height="12" viewBox="0 0 12 12"><path d="M0.5 6.5h10" stroke="#fff" fill="none"/></svg><svg class="tbtn" style="left:310px" width="12" height="12" viewBox="0 0 12 12"><rect x="1.5" y="1.5" width="9" height="9" stroke="#fff" fill="none"/></svg><svg class="tbtn" style="left:356px" width="12" height="12" viewBox="0 0 12 12"><path d="M1 1l10 10M11 1L1 11" stroke="#fff" stroke-width="1.1" fill="none"/></svg></div>
<div class="tab t1"><span>パラメーター</span></div><div class="tab t2"><span>レベル</span></div>
<div class="pane"></div>
<div class="tbl">
<div class="hdr"><div class="c1 jp"><span>パラメーター</span></div><div class="c2 jp"><span>バリュー</span></div></div>
<div class="row grp"><b>Common</b></div>
<div class="row"><div class="c1">Bars Limit (0 : Unlimited)</div><div class="c2">0</div></div>
<div class="row grp"><b>RCI</b></div>
<div class="row"><div class="c1">RCI_1 Period</div><div class="c2">9</div></div>
<div class="row"><div class="c1">RCI_2 Period</div><div class="c2">26</div></div>
<div class="row"><div class="c1">RCI_3 Period</div><div class="c2">0</div></div>
<div class="row"><div class="c1">RCI_4 Period</div><div class="c2">0</div></div>
<div class="row"><div class="c1">RCI_5 Period</div><div class="c2">52</div></div>
<div class="row"><div class="c1">Show Cross Dot</div><div class="c2">Yes</div></div>
<div class="row"><div class="c1">Show Last Bar</div><div class="c2">Yes</div></div>
<div class="row grp"><b>Styles</b></div>
<div class="row"><div class="c1">RCI 1 Up</div><div class="c2"><i class="sw" style="background:#006400"></i><span class="cn">DarkGreen</span><i class="ln" style="left:87px;width:68px"></i></div></div>
<div class="row"><div class="c1">RCI 1 Dn</div><div class="c2"><i class="sw" style="background:#dc143c"></i><span class="cn">Crimson</span><i class="ln" style="left:74px;width:81px"></i></div></div>
<div class="row"><div class="c1">RCI 2 Up</div><div class="c2"><i class="sw" style="background:#1e90ff"></i><span class="cn">DodgerBlue</span><i class="ln" style="left:91px;width:64px"></i></div></div>
<div class="row"><div class="c1">RCI 2 Dn</div><div class="c2"><i class="sw" style="background:#ff69b4"></i><span class="cn">HotPink</span><i class="ln" style="left:70px;width:85px"></i></div></div>
<div class="row"><div class="c1">RCI 3 Up</div><div class="c2"><i class="sw" style="background:#1e90ff"></i><span class="cn">DodgerBlue</span><i class="ln" style="left:91px;width:64px"></i></div></div>
<div class="row"><div class="c1">RCI 3 Dn</div><div class="c2"><i class="sw" style="background:#ff69b4"></i><span class="cn">HotPink</span><i class="ln" style="left:70px;width:85px"></i></div></div>
<div class="row"><div class="c1">RCI 4 Up</div><div class="c2"><i class="sw" style="background:#1e90ff"></i><span class="cn">DodgerBlue</span><i class="ln" style="left:91px;width:64px"></i></div></div>
<div class="row"><div class="c1">RCI 4 Dn</div><div class="c2"><i class="sw" style="background:#ff69b4"></i><span class="cn">HotPink</span><i class="ln" style="left:70px;width:85px"></i></div></div>
<div class="row"><div class="c1">RCI 5 Up</div><div class="c2"><i class="sw" style="background:#1e90ff"></i><span class="cn">DodgerBlue</span><i class="ln" style="left:91px;width:64px"></i></div></div>
<div class="row"><div class="c1">RCI 5 Dn</div><div class="c2"><i class="sw" style="background:#ff69b4"></i><span class="cn">HotPink</span><i class="ln" style="left:70px;width:85px"></i></div></div>
<div class="row"><div class="c1">RCI 5 Dot Up</div><div class="c2"><i class="sw" style="background:#ff1493"></i><span class="cn">DeepPink</span><i class="ln" style="left:80px;width:75px"></i></div></div>
<div class="row"><div class="c1">RCI 5 Dot Dn</div><div class="c2"><i class="sw" style="background:#32cd32"></i><span class="cn">LimeGreen</span><i class="ln" style="left:87px;width:68px"></i></div></div>
</div>
</div>
</body></html>
